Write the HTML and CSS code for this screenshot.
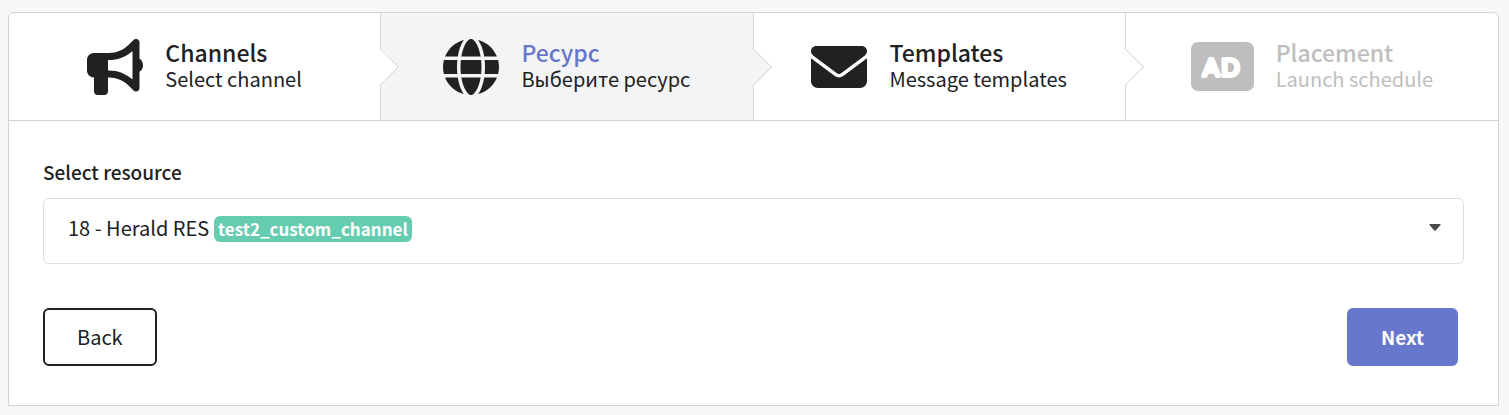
FILE: index.html
```html
<!doctype html>
<html lang="en">
    <head>
        <title>Herald</title>
        <meta charset="utf-8">
        <meta name="viewport" content="width=device-width, initial-scale=1.0">
        <link rel="stylesheet" href="styles.css">
    </head>
    <body>
        <div class="mainbox">
            <div class="steps">
                <div class="step">
                    <svg class="icon" viewBox="0 0 512 512" aria-hidden="true"><path d="M480 32c0-12.900-7.800-24.600-19.800-29.600s-25.700-2.200-34.900 6.900L381.700 53c-48 48-113.100 75-181 75H192 160 64c-35.300 0-64 28.700-64 64v96c0 35.300 28.700 64 64 64l0 128c0 17.700 14.300 32 32 32h64c17.700 0 32-14.300 32-32V352l8.700 0c67.900 0 133 27 181 75l43.600 43.600c9.200 9.200 22.900 11.900 34.900 6.900s19.800-16.600 19.800-29.600V300.400c18.600-8.800 32-32.500 32-60.400s-13.400-51.600-32-60.400V32zm-64 76.700V240 371.300C357.200 317.800 280.500 288 200.700 288H192V192h8.700c79.800 0 156.500-29.800 215.300-83.300z"/></svg>
                    <div class="content">
                        <div class="title">Channels</div>
                        <div class="description">Select channel</div>
                    </div>
                </div>
                <div class="step active">
                    <svg class="icon" viewBox="0 0 512 512" aria-hidden="true"><path d="M352 256c0 22.200-1.200 43.600-3.300 64H163.300c-2.200-20.400-3.300-41.800-3.300-64s1.200-43.600 3.300-64H348.700c2.200 20.400 3.300 41.800 3.300 64zm28.800-64H503.900c5.300 20.500 8.100 41.900 8.100 64s-2.800 43.500-8.100 64H380.800c2.100-20.600 3.200-42 3.200-64s-1.100-43.400-3.200-64zm112.600-32H376.700c-10-63.900-29.800-117.400-55.300-151.600c78.300 20.700 142 77.500 171.900 151.600zm-149.100 0H167.700c6.100-36.400 15.500-68.600 27-94.700c10.500-23.600 22.200-40.700 33.500-51.500C239.400 3.200 248.700 0 256 0s16.600 3.200 27.800 13.800c11.300 10.800 23 27.900 33.500 51.500c11.600 26 20.900 58.200 27 94.700zm-209 0H18.600C48.600 85.900 112.200 29.100 190.600 8.400C165.100 42.600 145.300 96.100 135.300 160zM8.100 192H131.200c-2.100 20.600-3.200 42-3.200 64s1.100 43.400 3.200 64H8.100C2.800 299.500 0 278.100 0 256s2.800-43.500 8.100-64zM194.700 446.600c-11.600-26-20.900-58.200-27-94.600H344.300c-6.100 36.400-15.500 68.600-27 94.600c-10.500 23.600-22.200 40.700-33.500 51.500C272.600 508.800 263.300 512 256 512s-16.600-3.200-27.800-13.800c-11.300-10.800-23-27.900-33.500-51.500zM135.300 352c10 63.900 29.800 117.400 55.300 151.600C112.200 482.900 48.600 426.100 18.600 352H135.300zm358.100 0c-30 74.100-93.600 130.900-171.900 151.600c25.500-34.200 45.200-87.700 55.300-151.600H493.400z"/></svg>
                    <div class="content">
                        <div class="title">Ресурс</div>
                        <div class="description">Выберите ресурс</div>
                    </div>
                </div>
                <div class="step">
                    <svg class="icon" viewBox="0 0 512 512" aria-hidden="true"><path d="M48 64C21.500 64 0 85.500 0 112c0 15.100 7.100 29.300 19.200 38.400L236.800 313.600c11.400 8.500 27 8.500 38.400 0L492.800 150.400c12.100-9.100 19.200-23.300 19.200-38.400c0-26.500-21.500-48-48-48H48zM0 176V384c0 35.300 28.700 64 64 64H448c35.300 0 64-28.700 64-64V176L294.400 339.200c-22.800 17.100-54 17.100-76.800 0L0 176z"/></svg>
                    <div class="content">
                        <div class="title">Templates</div>
                        <div class="description">Message templates</div>
                    </div>
                </div>
                <div class="step disabled">
                    <svg class="icon wide" viewBox="0 0 63 56">
                        <rect y="3" width="63" height="49" rx="7"/>
                        <text class="adtext" x="12" y="37">A<tspan dx="2">D</tspan></text>
                    </svg>
                    <div class="content">
                        <div class="title">Placement</div>
                        <div class="description">Launch schedule</div>
                    </div>
                </div>
            </div>
            <form class="form">
                <label class="label" for="resource">Select resource</label>
                <div class="dropdown">
                    <select class="select" id="resource" name="resource">
                        <option value="18">18 - Herald RES</option>
                    </select>
                    <span class="tag">test2_custom_channel</span>
                    <svg class="caret" viewBox="0 0 12 7" aria-hidden="true"><path d="M1 0h10q1 0 .5 1L7 6.200q-1 1-2 0L.5 1Q0 0 1 0z"/></svg>
                </div>
                <div class="buttons">
                    <button class="button" type="button">Back</button>
                    <button class="button primary" type="submit">Next</button>
                </div>
            </form>
        </div>
    </body>
</html>
```
FILE: styles.css
```css
* {
    box-sizing: border-box;
}
body {
    margin: 0;
    padding: 12px 10px 9px 8px;
    background-color: #f7f7f7;
    color: #212121;
    font-family: "Noto Sans CJK SC", "Noto Sans", sans-serif;
    font-size: 20px;
    line-height: 26px;
}
.mainbox {
    background-color: white;
    border: 1px solid #d4d4d5;
    border-radius: 6px 6px 0 0;
}
.steps {
    display: flex;
    border-bottom: 1px solid #d4d4d5;
}
.step {
    position: relative;
    width: 25%;
    display: flex;
    align-items: center;
    justify-content: center;
    gap: 22px;
    padding: 26px 0 25px;
    border-right: 1px solid #d9dadb;
}
.step:last-child {
    border-right: none;
}
/* arrow to the next step */
.step::after {
    content: "";
    position: absolute;
    z-index: 1;
    top: 50%;
    right: 0;
    width: 26px;
    height: 26px;
    background-color: white;
    border: solid #d9dadb;
    border-width: 0 1px 1px 0;
    transform: translate(50%, -50%) rotate(-45deg);
}
.step:last-child::after {
    display: none;
}
.active, .active::after {
    background-color: #f3f4f5;
}
.active .title {
    color: #6777cc;
}
.disabled {
    color: #bebebe;
}
.icon {
    width: 56px;
    height: 56px;
    fill: currentColor;
}
.wide {
    width: 63px;
}
.adtext {
    fill: white;
    stroke: white;
    stroke-width: 4px;
    stroke-linejoin: round;
    font-family: Lato, sans-serif;
    font-size: 24px;
    font-weight: 400;
}
.content {
    padding-bottom: 3px;
}
.title {
    font-size: 23px;
    font-weight: 500;
    line-height: 27px;
}
.form {
    padding: 38px 34px 39px;
}
.label {
    display: block;
    margin-bottom: 13px;
    font-size: 19px;
    font-weight: 500;
}
.dropdown {
    display: grid;
    align-items: start;
}
.select {
    grid-area: 1 / 1;
    width: 100%;
    height: 66px;
    padding: 0 24px 6px;
    appearance: none;
    background-color: white;
    border: 1px solid #dededf;
    border-radius: 6px;
    color: inherit;
    font: inherit;
}
.tag {
    grid-area: 1 / 1;
    justify-self: start;
    margin: 18px 0 0 171px;
    padding: 0 4px;
    background-color: #66ccb0;
    border-radius: 6px;
    color: white;
    font-size: 17px;
    font-weight: 700;
    pointer-events: none;
}
.caret {
    grid-area: 1 / 1;
    justify-self: end;
    width: 12px;
    height: 7px;
    margin: 26px 23px 0 0;
    fill: #4a4a4a;
    pointer-events: none;
}
.buttons {
    display: flex;
    justify-content: space-between;
    margin-top: 44px;
    padding-right: 6px;
}
.button {
    height: 58px;
    padding: 0 32px;
    background-color: white;
    border: 2px solid #212121;
    border-radius: 6px;
    color: #212121;
    font: inherit;
    cursor: pointer;
}
.primary {
    background-color: #6777cc;
    border-color: #6777cc;
    color: white;
    font-size: 19px;
    font-weight: 700;
}
```
